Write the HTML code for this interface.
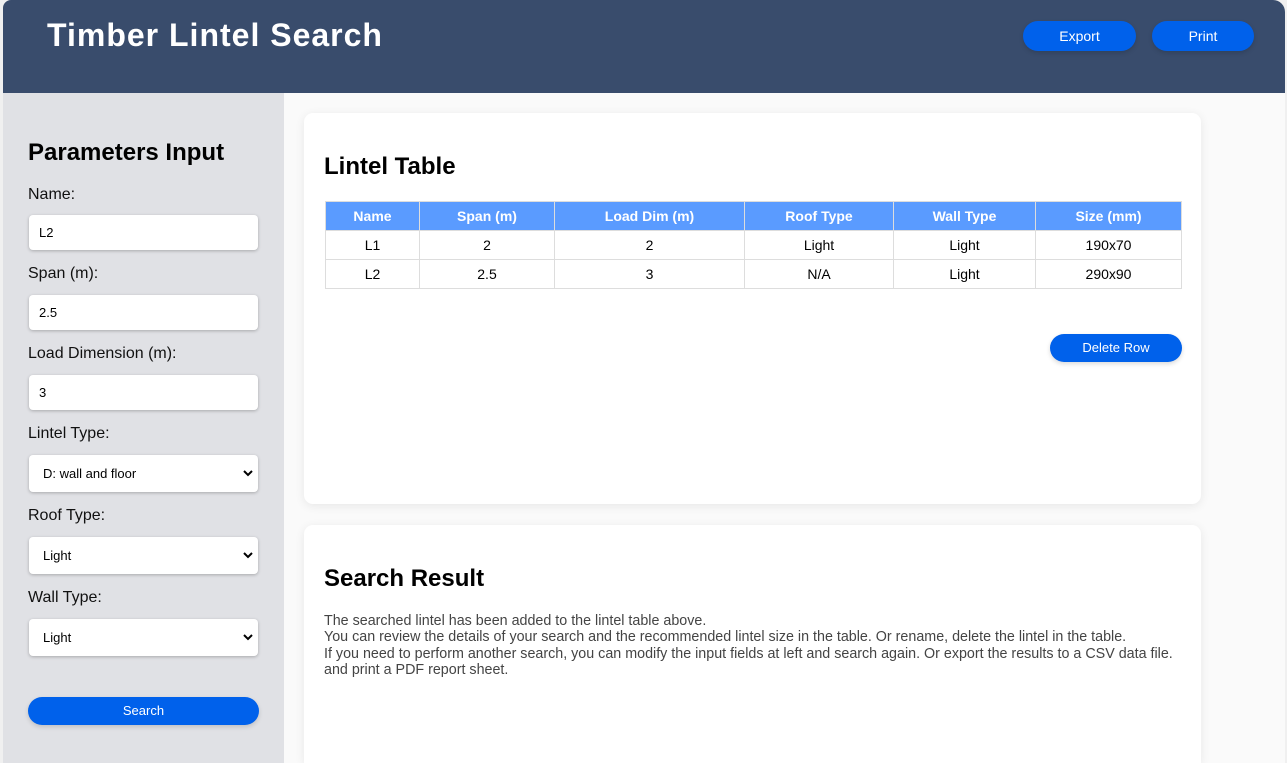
<!DOCTYPE html>
<html style="overflow:hidden;height:763px"><head><style>
*{box-sizing:border-box;margin:0;padding:0}
body{width:1287px;height:763px;overflow:hidden;background:#f0f0f0;font-family:"Liberation Sans",Arial,sans-serif;position:relative}
.abs{position:absolute}
#hdr{left:3px;top:0;width:1282px;height:93px;background:#394c6c;border-top-left-radius:8px;border-top-right-radius:12px}
#hdr h1{position:absolute;left:44px;top:17px;color:#fff;font-size:32px;font-weight:bold;letter-spacing:1px}
.btn{position:absolute;background:#0061eb;color:#fff;border-radius:16px;text-align:center;font-size:14px;box-shadow:0 2px 5px rgba(0,0,0,.15)}
#side{left:3px;top:93px;width:281px;height:670px;background:#e0e1e5}
#main{left:284px;top:93px;width:1001px;height:670px;background:#fafafa}
.lbl{position:absolute;left:28px;font-size:16px;color:#111}
.inp{position:absolute;left:29px;width:229px;background:#fff;border-radius:4px;box-shadow:0 1px 3px rgba(0,0,0,.25);font-size:13px;color:#000;padding-left:10px}
.sel{padding-left:14px}
.sel svg{position:absolute;right:5px;top:50%;margin-top:-4px}
.card{position:absolute;left:304px;width:897px;background:#fff;border-radius:9px;box-shadow:0 2px 10px rgba(0,0,0,.08)}
table{position:absolute;left:325px;top:201px;width:857px;border-collapse:collapse;font-size:14px}
th{background:#5a9bff;color:#fff;height:29px;border:1px solid #ddd;font-weight:bold}
td{height:29px;border:1px solid #ddd;text-align:center;color:#000}
h2{position:absolute;left:324px;font-size:24px;font-weight:bold;color:#000}
</style></head><body>
<div id="hdr" class="abs"><h1>Timber Lintel Search</h1></div>
<div class="btn" style="left:1023px;top:21px;width:113px;height:30px;line-height:30px">Export</div>
<div class="btn" style="left:1152px;top:21px;width:102px;height:30px;line-height:30px">Print</div>
<div id="side" class="abs"></div>
<div id="main" class="abs"></div>
<div class="abs" style="left:28px;top:139px;font-size:24px;font-weight:bold;color:#000">Parameters Input</div>
<div class="lbl" style="top:186px">Name:</div>
<div class="inp" style="top:215px;height:35px;line-height:35px">L2</div>
<div class="lbl" style="top:265px">Span (m):</div>
<div class="inp" style="top:295px;height:35px;line-height:35px">2.5</div>
<div class="lbl" style="top:345px">Load Dimension (m):</div>
<div class="inp" style="top:375px;height:35px;line-height:35px">3</div>
<div class="lbl" style="top:425px">Lintel Type:</div>
<div class="inp sel" style="top:455px;height:37px;line-height:37px">D: wall and floor<svg width="10" height="7" viewBox="0 0 10 7"><path d="M1 1L5 5L9 1" stroke="#000" stroke-width="2" fill="none"/></svg></div>
<div class="lbl" style="top:507px">Roof Type:</div>
<div class="inp sel" style="top:537px;height:37px;line-height:37px">Light<svg width="10" height="7" viewBox="0 0 10 7"><path d="M1 1L5 5L9 1" stroke="#000" stroke-width="2" fill="none"/></svg></div>
<div class="lbl" style="top:589px">Wall Type:</div>
<div class="inp sel" style="top:619px;height:37px;line-height:37px">Light<svg width="10" height="7" viewBox="0 0 10 7"><path d="M1 1L5 5L9 1" stroke="#000" stroke-width="2" fill="none"/></svg></div>
<div class="btn" style="left:28px;top:697px;width:231px;height:28px;line-height:28px;font-size:13px">Search</div>

<div class="card" style="top:113px;height:391px"></div>
<h2 style="top:153px">Lintel Table</h2>
<table>
<tr><th style="width:94px">Name</th><th style="width:135px">Span (m)</th><th style="width:190px">Load Dim (m)</th><th style="width:149px">Roof Type</th><th style="width:142px">Wall Type</th><th>Size (mm)</th></tr>
<tr><td>L1</td><td>2</td><td>2</td><td>Light</td><td>Light</td><td>190x70</td></tr>
<tr><td>L2</td><td>2.5</td><td>3</td><td>N/A</td><td>Light</td><td>290x90</td></tr>
</table>
<div class="btn" style="left:1050px;top:334px;width:132px;height:28px;line-height:28px;font-size:13px">Delete Row</div>

<div class="card" style="top:525px;height:238px;border-bottom-left-radius:0;border-bottom-right-radius:0"></div>
<h2 style="top:565px">Search Result</h2>
<div class="abs" style="left:324px;top:613px;font-size:14.3px;line-height:16.3px;color:#444;white-space:nowrap">The searched lintel has been added to the lintel table above.<br>You can review the details of your search and the recommended lintel size in the table. Or rename, delete the lintel in the table.<br>If you need to perform another search, you can modify the input fields at left and search again. Or export the results to a CSV data file.<br>and print a PDF report sheet.</div>
</body></html>
